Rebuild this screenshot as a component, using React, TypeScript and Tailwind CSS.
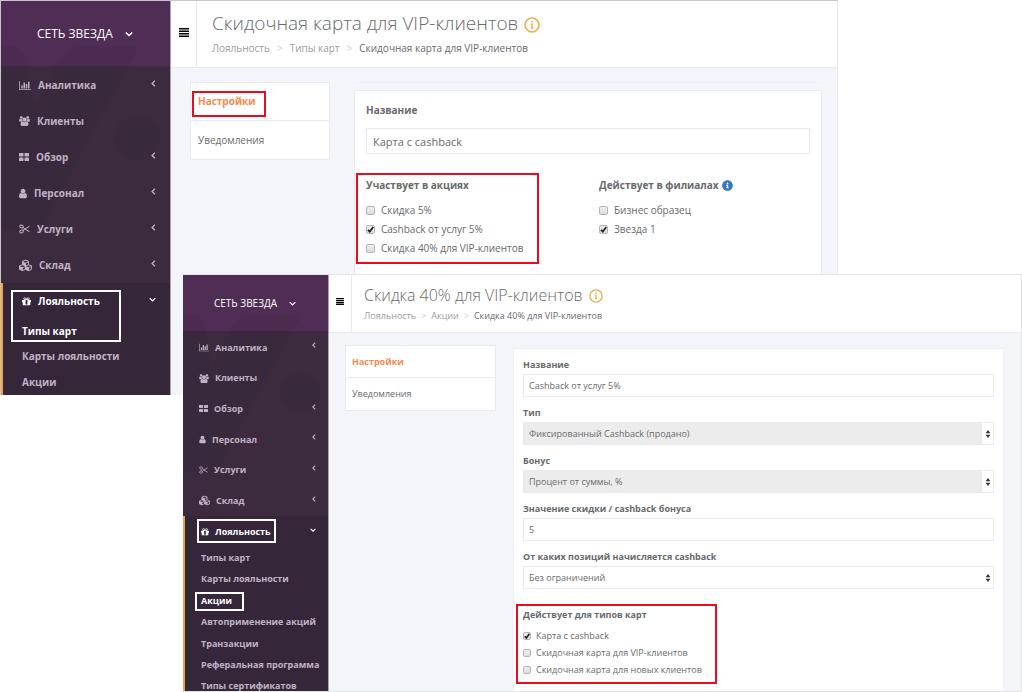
import React from "react";
import clsx from "clsx";
import { FaCubes, FaInfoCircle } from "react-icons/fa";

type Size = "md" | "sm";

type Option = { label: string; checked?: boolean };

/* Icons */

const BarChartIcon = ({ className }: { className: string }) => (
  <svg viewBox="0 0 2048 1792" fill="currentColor" className={className}>
    <path d="M640 896v512h-256v-512h256zm384-512v1024h-256v-1024h256zm1024 1152v128h-2048v-1536h128v1408h1920zm-640-896v768h-256v-768h256zm384-384v1152h-256v-1152h256z" />
  </svg>
);

const UsersIcon = ({ className }: { className: string }) => (
  <svg viewBox="0 0 1920 1792" fill="currentColor" className={className}>
    <path d="M593 896q-162 5-265 128h-134q-82 0-138-40.5t-56-118.5q0-353 124-353 6 0 43.5 21t97.5 42.5 119 21.5q67 0 133-23-5 37-5 66 0 139 81 256zm1071 637q0 120-73 189.5t-194 69.5h-874q-121 0-194-69.5t-73-189.5q0-53 3.5-103.5t14-109 26.5-108.5 43-97.5 62-81 85.5-53.5 111.5-20q10 0 43 21.5t73 48 107 48 135 21.5 135-21.5 107-48 73-48 43-21.5q61 0 111.5 20t85.5 53.5 62 81 43 97.5 26.5 108.5 14 109 3.5 103.5zm-1024-1277q0 106-75 181t-181 75-181-75-75-181 75-181 181-75 181 75 75 181zm704 384q0 159-112.5 271.5t-271.5 112.5-271.5-112.5-112.5-271.5 112.5-271.5 271.5-112.5 271.5 112.5 112.5 271.5zm576 225q0 78-56 118.5t-138 40.5h-134q-103-123-265-128 81-117 81-256 0-29-5-66 66 23 133 23 59 0 119-21.5t97.5-42.5 43.5-21q124 0 124 353zm-128-609q0 106-75 181t-181 75-181-75-75-181 75-181 181-75 181 75 75 181z" />
  </svg>
);

const GridIcon = ({ className }: { className: string }) => (
  <svg viewBox="0 0 20 20" fill="currentColor" className={className}>
    <rect x="0" y="2" width="9" height="7" rx="1" />
    <rect x="11" y="2" width="9" height="7" rx="1" />
    <rect x="0" y="11" width="9" height="7" rx="1" />
    <rect x="11" y="11" width="9" height="7" rx="1" />
  </svg>
);

const UserIcon = ({ className }: { className: string }) => (
  <svg viewBox="256 0 1280 1792" fill="currentColor" className={className}>
    <path d="M1536 1399q0 109-62.5 187t-150.5 78h-854q-88 0-150.5-78t-62.5-187q0-85 8.5-160.5t31.5-152 58.5-131 94-89 134.5-34.5q131 128 313 128t313-128q76 0 134.5 34.5t94 89 58.5 131 31.5 152 8.5 160.5zm-256-887q0 159-112.5 271.5t-271.5 112.5-271.5-112.5-112.5-271.5 112.5-271.5 271.5-112.5 271.5 112.5 112.5 271.5z" />
  </svg>
);

const ScissorsIcon = ({ className }: { className: string }) => (
  <svg viewBox="0 0 22 20" fill="none" stroke="currentColor" strokeWidth="2" className={className}>
    <ellipse cx="5" cy="5" rx="3.6" ry="2.8" transform="rotate(20 5 5)" />
    <ellipse cx="5" cy="15" rx="3.6" ry="2.8" transform="rotate(-20 5 15)" />
    <path d="M8 7l4 3 9-5.5M8 13l4-3 9 5.5" />
  </svg>
);

const GiftIcon = ({ className }: { className: string }) => (
  <svg viewBox="128 128 1536 1536" fill="currentColor" className={className}>
    <path d="M1056 1356v-716h-320v716q0 25 18 38.5t46 13.5h192q28 0 46-13.5t18-38.5zm-456-844h195l-126-161q-26-31-69-31-40 0-68 28t-28 68 28 68 68 28zm688-96q0-40-28-68t-68-28q-43 0-69 31l-125 161h194q40 0 68-28t28-68zm376 256v320q0 14-9 23t-23 9h-96v416q0 40-28 68t-68 28h-1088q-40 0-68-28t-28-68v-416h-96q-14 0-23-9t-9-23v-320q0-14 9-23t23-9h440q-93 0-158.5-65.5t-65.5-158.5 65.5-158.5 158.5-65.5q107 0 168 77l128 165 128-165q61-77 168-77 93 0 158.5 65.5t65.5 158.5-65.5 158.5-158.5 65.5h440q14 0 23 9t9 23z" />
  </svg>
);

const Chevron = ({ down, className }: { down?: boolean; className: string }) => (
  <svg viewBox="0 0 10 10" fill="none" stroke="currentColor" strokeWidth="1.8" className={className}>
    <path d={down ? "M1 3l4 4 4-4" : "M7 1L3 5l4 4"} />
  </svg>
);

const Bars = ({ className }: { className: string }) => (
  <svg viewBox="0 0 10 9" fill="#000" className={className}>
    <path d="M0 0h10v1.6H0zM0 2.5h10v1.6H0zM0 5h10v1.6H0zM0 7.4h10V9H0z" />
  </svg>
);

const InfoCircle = ({ className }: { className: string }) => (
  <svg viewBox="0 0 16 16" fill="none" className={className}>
    <circle cx="8" cy="8" r="7" stroke="#f0ad4e" strokeWidth="1.6" />
    <path d="M7.2 4h1.6v1.6H7.2zM6.5 6.6h2.2v4.1h.8v1.1h-3v-1.1h.7V7.7h-.7z" fill="#f0ad4e" />
  </svg>
);

/* Faint brand mark behind the menu */
const Watermark = () => (
  <svg viewBox="0 0 170 283" className="pointer-events-none absolute top-0 left-0 w-full text-black opacity-[0.03]">
    <path
      fill="currentColor"
      d="M6 46h8q10 2 12 18l7 44 24-46q8-16 24-16h56q-2 10-8 18L40 230H0V46z"
    />
    <circle cx="137" cy="138" r="23" fill="currentColor" />
  </svg>
);

/* Sidebar */

const menu = [
  { label: "Аналитика", icon: "chart", arrow: true },
  { label: "Клиенты", icon: "users", arrow: false },
  { label: "Обзор", icon: "grid", arrow: true },
  { label: "Персонал", icon: "user", arrow: true },
  { label: "Услуги", icon: "scissors", arrow: true },
  { label: "Склад", icon: "cubes", arrow: true },
];

const MenuIcon = ({ name, size }: { name: string; size: Size }) => {
  const sm = size === "sm";
  switch (name) {
    case "chart":
      return <BarChartIcon className={sm ? "h-[9px] w-[10px]" : "h-[11px] w-3"} />;
    case "users":
      return <UsersIcon className={sm ? "h-[9px] w-[10px]" : "h-[10px] w-[11px]"} />;
    case "grid":
      return <GridIcon className={sm ? "size-[9px]" : "size-[10px]"} />;
    case "user":
      return <UserIcon className={sm ? "h-[9px] w-[7px]" : "h-[11px] w-2"} />;
    case "scissors":
      return <ScissorsIcon className={sm ? "h-2 w-[9px]" : "h-[10px] w-[11px]"} />;
    default:
      return <FaCubes className={sm ? "size-[11px]" : "size-[13px]"} />;
  }
};

type SidebarProps = {
  size: Size;
  items: string[];
  active: string;
  frames: React.ReactNode;
};

const Sidebar = ({ size, items, active, frames }: SidebarProps) => {
  const sm = size === "sm";
  return (
    <aside
      className={clsx(
        "relative shrink-0 border-r border-[#a9a3ac] bg-[#3c2b3f] font-bold text-[#c0b3c6]",
        sm ? "w-[146px] text-[9px]" : "w-[170px] text-[10px]"
      )}
    >
      <button
        type="button"
        className={clsx(
          "flex w-full items-center border-b border-[#432848] bg-[#4f2d54] font-normal text-white",
          sm ? "h-[57px] gap-3 pl-[31px] text-[10px]" : "h-[66px] gap-3 pl-9 text-xs"
        )}
      >
        СЕТЬ ЗВЕЗДА
        <Chevron down className={sm ? "size-[7px]" : "size-2"} />
      </button>
      <Watermark />

      <nav className="relative">
        <ul className={clsx("flex flex-col", sm ? "h-[184px]" : "h-[216px]")}>
          {menu.map((item) => (
            <li key={item.label} className="flex-1">
              <a
                href="#"
                className={clsx("flex h-full items-center", sm ? "gap-[6px] pl-4" : "gap-[7px] pl-[18px]")}
              >
                <MenuIcon name={item.icon} size={size} />
                {item.label}
                {item.arrow && (
                  <Chevron className={clsx("mb-1 ml-auto", sm ? "mr-[11px] size-[6px]" : "mr-[13px] size-[7px]")} />
                )}
              </a>
            </li>
          ))}
        </ul>

        <div className={clsx("relative border-l-[#eea63c] bg-[#35263a]", sm ? "border-l-2" : "border-l-2")}>
          <a
            href="#"
            className={clsx(
              "flex items-center text-white",
              sm ? "h-[31px] gap-[6px] pl-4" : "h-9 gap-[7px] pl-[19px]"
            )}
          >
            <GiftIcon className={sm ? "size-2" : "size-[9px]"} />
            Лояльность
            <Chevron down className={clsx("mb-1 ml-auto", sm ? "mr-3 size-[6px]" : "mr-[14px] size-[7px]")} />
          </a>
          <ul className={clsx("flex flex-col", sm ? "h-[150px]" : "h-[76px]")}>
            {items.map((item) => (
              <li key={item} className="flex-1">
                <a
                  href="#"
                  className={clsx(
                    "flex h-full items-center whitespace-nowrap",
                    sm ? "pl-4" : "pl-[19px]",
                    item === active && "text-white"
                  )}
                >
                  {item}
                </a>
              </li>
            ))}
          </ul>
          {frames}
        </div>
      </nav>
    </aside>
  );
};

/* Page header */

const PageHeader = ({ size, title, crumbs }: { size: Size; title: string; crumbs: string[] }) => {
  const sm = size === "sm";
  return (
    <header className={clsx("flex border-b border-[#e9eaef] bg-white", sm ? "h-[58px]" : "h-[67px]")}>
      <button
        type="button"
        aria-label="Меню"
        className={clsx(
          "flex items-center justify-center border-r border-[#e9eaef] pb-1",
          sm ? "w-[23px]" : "w-[26px]"
        )}
      >
        <Bars className={sm ? "h-[7px] w-2" : "h-[9px] w-[10px]"} />
      </button>
      <div className={sm ? "pt-2 pl-3" : "pt-2 pl-[15px]"}>
        <h1
          className={clsx(
            "flex items-center gap-[6px] font-light text-[#676a6c]",
            sm ? "h-6 text-base" : "h-7 text-[19px]"
          )}
        >
          {title}
          <InfoCircle className={sm ? "mt-[2px] size-[14px]" : "mt-[3px] size-4"} />
        </h1>
        <nav
          className={clsx(
            "flex items-center text-[#9a9c9e]",
            sm ? "h-[18px] gap-[5px] text-[9px]" : "h-[22px] gap-[7px] text-[10px]"
          )}
        >
          {crumbs.map((crumb, i) => (
            <React.Fragment key={crumb}>
              {i > 0 && <span className="text-[#ccc]">&gt;</span>}
              <a href="#" className={clsx(i === crumbs.length - 1 && "text-[#676a6c]")}>
                {crumb}
              </a>
            </React.Fragment>
          ))}
        </nav>
      </div>
    </header>
  );
};

/* Tabs on the left of the form */

const SideTabs = ({ size, framed }: { size: Size; framed?: boolean }) => {
  const sm = size === "sm";
  const row = clsx("flex items-center", sm ? "h-8 px-[6px]" : "h-[38px] px-[7px]");
  return (
    <nav
      className={clsx(
        "shrink-0 self-start border border-[#e9eaee] bg-white",
        sm ? "w-[151px] text-[9px]" : "w-[140px] text-[10px]"
      )}
    >
      <a href="#" className={clsx(row, "relative border-b border-[#e9eaee] font-bold text-[#f58b4c]")}>
        Настройки
        {framed && <span className="absolute top-2 left-px h-[26px] w-[74px] border-2 border-[#ea0c1c]" />}
      </a>
      <a href="#" className={clsx(row, "text-[#676a6c]")}>
        Уведомления
      </a>
    </nav>
  );
};

/* Form controls */

const Checkbox = ({ label, checked, size }: Option & { size: Size }) => {
  const sm = size === "sm";
  return (
    <label className={clsx("flex items-center", sm ? "gap-[5px]" : "gap-[6px]")}>
      <span className="relative flex">
        <input
          type="checkbox"
          defaultChecked={checked}
          className={clsx(
            "peer appearance-none rounded-xs border border-[#b4b4b4] bg-linear-to-b from-[#efefef] to-[#dcdcdc]",
            sm ? "size-2" : "size-[9px]"
          )}
        />
        <svg
          viewBox="0 0 9 9"
          fill="none"
          stroke="#222"
          strokeWidth="1.8"
          className="pointer-events-none absolute inset-0 hidden size-full peer-checked:block"
        >
          <path d="M2 4.8l1.8 1.9L7.2 2" />
        </svg>
      </span>
      {label}
    </label>
  );
};

type ChecklistProps = { title: React.ReactNode; options: Option[]; size: Size };

const Checklist = ({ title, options, size }: ChecklistProps) => {
  const sm = size === "sm";
  return (
    <fieldset>
      <legend className={clsx("flex items-center gap-[3px] font-bold", sm ? "mb-[5px] h-[18px]" : "mb-2 h-5")}>
        {title}
      </legend>
      <div className={clsx("flex flex-col", sm ? "gap-[3px] leading-[14px]" : "gap-1")}>
        {options.map((option) => (
          <Checkbox key={option.label} {...option} size={size} />
        ))}
      </div>
    </fieldset>
  );
};

type FieldProps = { id: string; label: string; value: string; select?: boolean; disabled?: boolean };

const Field = ({ id, label, value, select, disabled }: FieldProps) => (
  <div className="mb-[7px]">
    <label htmlFor={id} className="block h-[18px] leading-[18px] font-bold">
      {label}
    </label>
    {select ? (
      <div className="relative">
        <select
          id={id}
          disabled={disabled}
          className={clsx(
            "block h-[23px] w-full appearance-none border border-[#e9eaec] px-[5px] opacity-100",
            disabled ? "bg-[#ececec]" : "bg-white"
          )}
        >
          <option>{value}</option>
        </select>
        <span className="pointer-events-none absolute inset-y-px right-px flex w-[11px] items-center justify-center bg-white">
          <svg viewBox="0 0 6 8" fill="#333" className="h-2 w-[6px]">
            <path d="M3 0l2.4 3.2H.6zM3 8L.6 4.8h4.8z" />
          </svg>
        </span>
      </div>
    ) : (
      <input
        id={id}
        type="text"
        defaultValue={value}
        className="block h-[23px] w-full border border-[#e9eaec] bg-white px-[5px]"
      />
    )}
  </div>
);

/* Windows */

const CardWindow = () => (
  <section className="flex w-[82%] border-t border-l border-[#c9c6cb] bg-[#f4f5fa]">
    <Sidebar
      size="md"
      items={["Типы карт", "Карты лояльности", "Акции"]}
      active="Типы карт"
      frames={<span className="absolute top-[7px] left-2 h-[52px] w-[110px] border-2 border-white" />}
    />
    <main className="flex min-w-0 flex-1 flex-col border-r border-[#e9eaef]">
      <PageHeader
        size="md"
        title="Скидочная карта для VIP-клиентов"
        crumbs={["Лояльность", "Типы карт", "Скидочная карта для VIP-клиентов"]}
      />
      <div className="flex flex-1 gap-6 pt-[14px] pr-[15px] pl-[19px]">
        <SideTabs size="md" framed />
        <div className="flex flex-1 flex-col border-t border-[#eff0f4] pt-[7px]">
          <form className="flex-1 border border-[#e9eaee] bg-white px-[11px] pt-[9px] text-[10px] text-[#676a6c]">
            <label htmlFor="card-name" className="block h-[28px] leading-5 font-bold">
              Название
            </label>
            <input
              id="card-name"
              type="text"
              defaultValue="Карта с cashback"
              className="block h-[26px] w-full border border-[#e9eaec] bg-white px-[6px] text-[11px]"
            />
            <div className="mt-[21px] grid grid-cols-[233px_1fr]">
              <div className="relative">
                <Checklist
                  size="md"
                  title="Участвует в акциях"
                  options={[
                    { label: "Скидка 5%" },
                    { label: "Cashback от услуг 5%", checked: true },
                    { label: "Скидка 40% для VIP-клиентов" },
                  ]}
                />
                <span className="pointer-events-none absolute -top-[2px] -left-[10px] h-[91px] w-[183px] border-2 border-[#ea0c1c]" />
              </div>
              <Checklist
                size="md"
                title={
                  <>
                    Действует в филиалах
                    <FaInfoCircle className="size-[11px] text-[#337ab7]" />
                  </>
                }
                options={[{ label: "Бизнес образец" }, { label: "Звезда 1", checked: true }]}
              />
            </div>
          </form>
        </div>
      </div>
    </main>
  </section>
);

const PromoWindow = () => (
  <section className="absolute top-[274px] right-0 bottom-0 left-[183px] flex overflow-hidden border border-l-0 border-[#e4e4e8] bg-[#f4f5fa]">
    <Sidebar
      size="sm"
      items={[
        "Типы карт",
        "Карты лояльности",
        "Акции",
        "Автоприменение акций",
        "Транзакции",
        "Реферальная программа",
        "Типы сертификатов",
      ]}
      active="Акции"
      frames={
        <>
          <span className="absolute top-[3px] left-3 h-6 w-[79px] border-2 border-white" />
          <span className="absolute top-[76px] left-[10px] h-[19px] w-[49px] border-2 border-white" />
        </>
      }
    />
    <main className="flex min-w-0 flex-1 flex-col">
      <PageHeader
        size="sm"
        title="Скидка 40% для VIP-клиентов"
        crumbs={["Лояльность", "Акции", "Скидка 40% для VIP-клиентов"]}
      />
      <div className="flex flex-1 gap-[17px] pt-3 pr-[17px] pl-4">
        <SideTabs size="sm" />
        <form className="mt-[3px] flex-1 border border-b-0 border-[#eff0f4] bg-white px-[9px] pt-[7px] text-[9px] text-[#676a6c]">
          <Field id="name" label="Название" value="Cashback от услуг 5%" />
          <Field id="type" label="Тип" value="Фиксированный Cashback (продано)" select disabled />
          <Field id="bonus" label="Бонус" value="Процент от суммы, %" select disabled />
          <Field id="amount" label="Значение скидки / cashback бонуса" value="5" />
          <Field id="scope" label="От каких позиций начисляется cashback" value="Без ограничений" select />
          <div className="relative mt-[17px]">
            <Checklist
              size="sm"
              title="Действует для типов карт"
              options={[
                { label: "Карта с cashback", checked: true },
                { label: "Скидочная карта для VIP-клиентов" },
                { label: "Скидочная карта для новых клиентов" },
              ]}
            />
            <span className="pointer-events-none absolute -top-[2px] -left-[7px] h-20 w-[201px] border-2 border-[#ea0c1c]" />
          </div>
        </form>
      </div>
    </main>
  </section>
);

export default function App() {
  return (
    <div className="relative min-h-screen overflow-hidden bg-white font-['Open_Sans',sans-serif]">
      <CardWindow />
      <PromoWindow />
    </div>
  );
}
